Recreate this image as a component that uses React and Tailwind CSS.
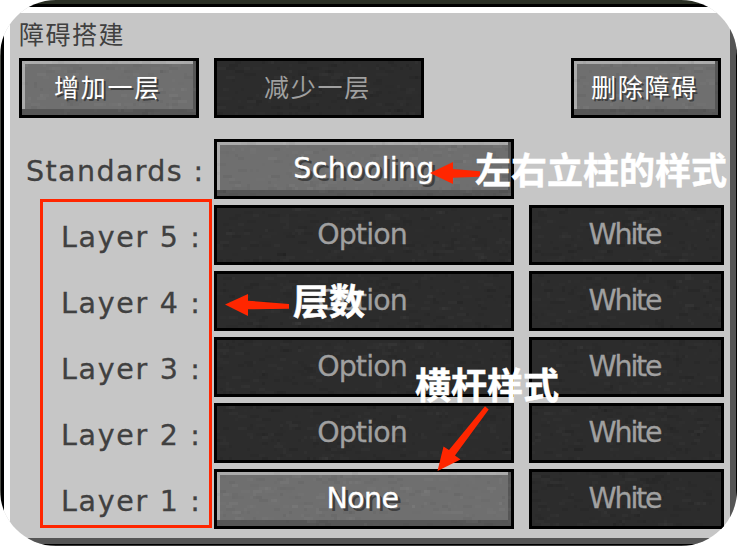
import React from "react";

const LATIN = "font-['DejaVu_Sans',sans-serif] [-webkit-text-stroke:0.3px_currentColor]";
const CJK = "font-['Noto_Sans_CJK_SC',sans-serif]";

// Deterministic blocky stone grain, drawn in 3px-tall cells.
function Grain({ seed, dark }) {
  let s = seed * 7919 + 17;
  const rnd = () => {
    s = (s * 16807) % 2147483647;
    return s / 2147483647;
  };
  const cells = Array.from({ length: 300 }, () => ({
    x: Math.floor(rnd() * 100) * 3,
    y: Math.floor(rnd() * 18) * 3,
    w: 3 + Math.floor(rnd() * 3) * 3,
    light: rnd() > 0.5,
    o: rnd() * (dark ? 0.02 : 0.035) + 0.005,
  }));
  return (
    <svg className="absolute inset-0 h-full w-full" shapeRendering="crispEdges" aria-hidden="true">
      {cells.map((c, i) => (
        <rect key={i} x={c.x} y={c.y} width={c.w} height="3" fill={c.light ? "#fff" : "#000"} opacity={dark && !c.light ? c.o * 3 : c.o} />
      ))}
    </svg>
  );
}

function Button({ children, width, disabled, seed, textClass }) {
  return (
    <button
      disabled={disabled}
      className={`relative flex h-[60px] shrink-0 items-center justify-center overflow-hidden border-[3px] border-black ${width} ${disabled ? "bg-[#2c2c2c] text-[#a0a0a0]" : "bg-[#6f6f6f] text-white"}`}
    >
      {!disabled && (
        <>
          <span className="absolute inset-y-0 left-0 w-[3px] bg-[#aaaaaa]" />
          <span className="absolute inset-x-0 top-0 h-[3px] bg-[#aaaaaa]" />
          <span className="absolute inset-y-0 right-0 w-[3px] bg-[#565656]" />
          <span className="absolute inset-x-0 bottom-0 h-[6px] bg-[#565656]" />
        </>
      )}
      <Grain seed={seed} dark={disabled} />
      <span className={`relative whitespace-nowrap ${textClass}`}>{children}</span>
    </button>
  );
}

const cjkText = `${CJK} text-[25px] leading-[50px] tracking-[1.8px] pr-[3px] pb-[4px]`;
const latinText = `${LATIN} text-[28.5px] leading-[54px]`;

const layers = [5, 4, 3, 2, 1];

export default function App() {
  return (
    <div className="h-[546px] w-[737px] overflow-hidden bg-white">
      <div className="h-[546px] w-[737px] overflow-hidden rounded-[56px]">
        <div className="h-[546px] w-[737px] border-t-4 border-b border-l border-t-[#2b3025] border-b-[#353535] border-l-[#4b4c46]">
          <div className="h-[541px] w-[736px] border-t-[3px] border-r border-b border-l-[3px] border-black">
            <div className="h-[537px] w-[732px] border-6 border-t-white border-r-[#555555] border-b-[#555555] border-l-white bg-[#c6c6c6]">
              <div className="flex flex-col pl-[9px]">
                <h1 className={`h-[45px] text-[25px] leading-[40px] font-normal tracking-[1.5px] text-[#404040] ${CJK}`}>障碍搭建</h1>
                <div className="flex">
                  <Button width="w-[180px]" seed={1} textClass={`${cjkText} [text-shadow:2px_2px_0_#3f3f3f]`}>增加一层</Button>
                  <div className="ml-[15px]">
                    <Button width="w-[210px]" seed={2} disabled textClass={cjkText}>减少一层</Button>
                  </div>
                  <div className="ml-[147px]">
                    <Button width="w-[150px]" seed={3} textClass={`${cjkText} [text-shadow:2px_2px_0_#3f3f3f]`}>删除障碍</Button>
                  </div>
                </div>
                <div className="mt-[21px] flex flex-col gap-[6px]">
                  <div className="flex h-[60px]">
                    <div className={`w-[195px] pl-[7px] text-[28.5px] leading-[66px] tracking-[1.4px] whitespace-pre text-[#404040] ${LATIN}`}>
                      Standards :
                    </div>
                    <Button width="w-[300px]" seed={4} textClass={`${latinText} tracking-[0.3px] [text-shadow:3px_3px_0_#3f3f3f]`}>Schooling</Button>
                  </div>
                  {layers.map((n) => (
                    <div key={n} className="flex h-[60px]">
                      <div className={`w-[195px] pl-[42px] text-[28.5px] leading-[66px] tracking-[1.7px] whitespace-pre text-[#404040] ${LATIN}`}>
                        Layer {n} :
                      </div>
                      <Button
                        width="w-[300px]"
                        seed={5 + n}
                        disabled={n !== 1}
                        textClass={n === 1 ? `${latinText} tracking-[-0.6px] pr-[3px] [text-shadow:3px_3px_0_#3f3f3f]` : `${latinText} tracking-[-0.9px] pr-[4px]`}
                      >
                        {n === 1 ? "None" : "Option"}
                      </Button>
                      <div className="ml-[15px]">
                        <Button width="w-[195px]" seed={12 + n} disabled textClass={`${latinText} tracking-[-2.2px] pr-[4px]`}>White</Button>
                      </div>
                    </div>
                  ))}
                </div>
              </div>
            </div>
          </div>
        </div>
      </div>

      {/* Annotations over the panel */}
      <div className="pointer-events-none absolute top-[199px] left-[40px] h-[329px] w-[172px] border-[3px] border-[#ff2600]" />
      <svg className="pointer-events-none absolute top-0 left-0" width="737" height="546" viewBox="0 0 737 546" fill="#ff2600" aria-hidden="true">
        <path d="M430 173L453 162V169L480 171.3V176.7L453 177.7V184Z" />
        <path d="M225 304.5L248 294V300.7L289 304V308.7L248 309.3V316Z" />
        <path d="M437.5 471L443.5 446.5L449 450L485 406.3L488.7 409.5L455 455.5L460.5 459.5Z" />
      </svg>
      <div className={`pointer-events-none absolute top-[148px] left-[475px] text-[36px] leading-[40px] font-bold whitespace-nowrap text-white [-webkit-text-stroke:0.5px_white] ${CJK}`}>左右立柱的样式</div>
      <div className={`pointer-events-none absolute top-[279px] left-[293px] text-[36px] leading-[40px] font-bold whitespace-nowrap text-white [-webkit-text-stroke:0.5px_white] ${CJK}`}>层数</div>
      <div className={`pointer-events-none absolute top-[363px] left-[415px] text-[36px] leading-[40px] font-bold whitespace-nowrap text-white [-webkit-text-stroke:0.5px_white] ${CJK}`}>横杆样式</div>
    </div>
  );
}
